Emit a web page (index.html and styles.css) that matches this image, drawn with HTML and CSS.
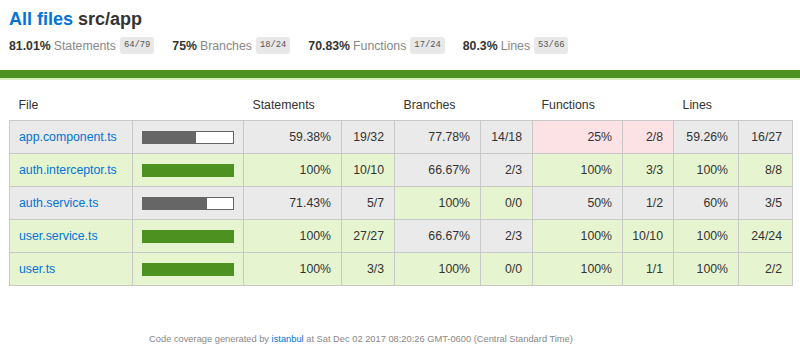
FILE: index.html
```html
<!DOCTYPE html>
<html>
<head>
<meta charset="utf-8">
<title>Code coverage report for src/app</title>
<link rel="stylesheet" href="styles.css">
</head>
<body>
<div class="wrapper">
  <div class="pad-top">
    <h1 class="title"><a class="link" href="#">All files</a> src/app</h1>
    <div class="summary">
      <div class="stat"><span class="strong">81.01%</span><span class="quiet">Statements</span><span class="fraction">64/79</span></div>
      <div class="stat"><span class="strong">75%</span><span class="quiet">Branches</span><span class="fraction">18/24</span></div>
      <div class="stat"><span class="strong">70.83%</span><span class="quiet">Functions</span><span class="fraction">17/24</span></div>
      <div class="stat"><span class="strong">80.3%</span><span class="quiet">Lines</span><span class="fraction">53/66</span></div>
    </div>
  </div>
  <div class="status-line"></div>
  <div class="pad-table">
    <table class="coverage-summary">
      <colgroup>
        <col class="c-file"><col class="c-bar">
        <col class="c-sp"><col class="c-sf">
        <col class="c-bp"><col class="c-bf">
        <col class="c-fp"><col class="c-ff">
        <col class="c-lp"><col class="c-lf">
      </colgroup>
      <thead>
        <tr>
          <th class="th-file">File</th>
          <th></th>
          <th colspan="2">Statements</th>
          <th colspan="2">Branches</th>
          <th colspan="2">Functions</th>
          <th colspan="2">Lines</th>
        </tr>
      </thead>
      <tbody>
        <tr>
          <td class="file medium"><a class="link" href="#">app.component.ts</a></td>
          <td class="pic medium"><div class="chart"><div class="cover-fill" style="width:59.38%"></div></div></td>
          <td class="pct medium">59.38%</td><td class="abs medium">19/32</td>
          <td class="pct medium">77.78%</td><td class="abs medium">14/18</td>
          <td class="pct low">25%</td><td class="abs low">2/8</td>
          <td class="pct medium">59.26%</td><td class="abs medium">16/27</td>
        </tr>
        <tr>
          <td class="file high"><a class="link" href="#">auth.interceptor.ts</a></td>
          <td class="pic high"><div class="chart"><div class="cover-fill" style="width:100%"></div></div></td>
          <td class="pct high">100%</td><td class="abs high">10/10</td>
          <td class="pct medium">66.67%</td><td class="abs medium">2/3</td>
          <td class="pct high">100%</td><td class="abs high">3/3</td>
          <td class="pct high">100%</td><td class="abs high">8/8</td>
        </tr>
        <tr>
          <td class="file medium"><a class="link" href="#">auth.service.ts</a></td>
          <td class="pic medium"><div class="chart"><div class="cover-fill" style="width:71.43%"></div></div></td>
          <td class="pct medium">71.43%</td><td class="abs medium">5/7</td>
          <td class="pct high">100%</td><td class="abs high">0/0</td>
          <td class="pct medium">50%</td><td class="abs medium">1/2</td>
          <td class="pct medium">60%</td><td class="abs medium">3/5</td>
        </tr>
        <tr>
          <td class="file high"><a class="link" href="#">user.service.ts</a></td>
          <td class="pic high"><div class="chart"><div class="cover-fill" style="width:100%"></div></div></td>
          <td class="pct high">100%</td><td class="abs high">27/27</td>
          <td class="pct medium">66.67%</td><td class="abs medium">2/3</td>
          <td class="pct high">100%</td><td class="abs high">10/10</td>
          <td class="pct high">100%</td><td class="abs high">24/24</td>
        </tr>
        <tr>
          <td class="file high"><a class="link" href="#">user.ts</a></td>
          <td class="pic high"><div class="chart"><div class="cover-fill" style="width:100%"></div></div></td>
          <td class="pct high">100%</td><td class="abs high">3/3</td>
          <td class="pct high">100%</td><td class="abs high">0/0</td>
          <td class="pct high">100%</td><td class="abs high">1/1</td>
          <td class="pct high">100%</td><td class="abs high">2/2</td>
        </tr>
      </tbody>
    </table>
  </div>
</div>
<div class="footer">Code coverage generated by <a class="link" href="#">istanbul</a> at Sat Dec 02 2017 08:20:26 GMT-0600 (Central Standard Time)</div>
</body>
</html>
```

FILE: styles.css
```css
html, body {
  margin: 0;
  padding: 0;
  background: #fff;
}
body {
  font-family: "Liberation Sans", Arial, Helvetica, sans-serif;
  font-size: 12.3px;
  color: #333;
}
.link {
  color: #0074D9;
  text-decoration: none;
}
.pad-top {
  padding: 8px 9px 0;
}
.title {
  margin: 0;
  font-size: 18px;
  line-height: 22px;
  font-weight: bold;
}
.summary {
  display: flex;
  align-items: center;
  margin-top: 7px;
  height: 17px;
}
.stat {
  margin-right: 18px;
  display: flex;
  align-items: center;
}
.strong {
  font-weight: bold;
}
.quiet {
  color: #888;
  margin-left: 3px;
}
.fraction {
  font-family: "Liberation Mono", "DejaVu Sans Mono", monospace;
  font-size: 8.8px;
  line-height: 9px;
  color: #555;
  background: #e8e8e8;
  padding: 4px 4px;
  border-radius: 3px;
  margin-left: 4px;
}
.status-line {
  margin-top: 16px;
  height: 8px;
  background: rgb(77,146,33);
  border-bottom: 2px solid #d9efc2;
}
.pad-table {
  padding: 9px 8px 0 9px;
}
.coverage-summary {
  border-collapse: collapse;
  table-layout: fixed;
  width: 783px;
}
.c-file { width: 123px; }
.c-bar { width: 111px; }
.c-sp { width: 98px; }
.c-sf { width: 53px; }
.c-bp { width: 86px; }
.c-bf { width: 52px; }
.c-fp { width: 90px; }
.c-ff { width: 51px; }
.c-lp { width: 65px; }
.c-lf { width: 54px; }
.coverage-summary th {
  text-align: left;
  font-weight: normal;
  white-space: nowrap;
  height: 31px;
  padding: 0 9px;
  vertical-align: middle;
}
.coverage-summary td {
  border: 1px solid #c8c8c8;
  height: 32px;
  padding: 0 9px;
  vertical-align: middle;
  white-space: nowrap;
}
.coverage-summary td.pct,
.coverage-summary td.abs {
  text-align: right;
  padding-right: 10px;
}
.coverage-summary td.pic {
  padding: 0 0 0 9px;
}
.high { background: rgb(230,245,208); }
.medium { background: #eaeaea; }
.low { background: #fce1e5; }
.chart {
  width: 90px;
  height: 11px;
  border: 1px solid #666;
  background: #fff;
  display: flex;
}
.cover-fill {
  height: 11px;
  background: #666;
}
.high .chart {
  border-color: rgb(77,146,33);
}
.high .cover-fill {
  background: rgb(77,146,33);
}
.footer {
  margin-top: 47px;
  padding-right: 78px;
  text-align: center;
  font-size: 9.3px;
  line-height: 12px;
  color: #888;
}
```
